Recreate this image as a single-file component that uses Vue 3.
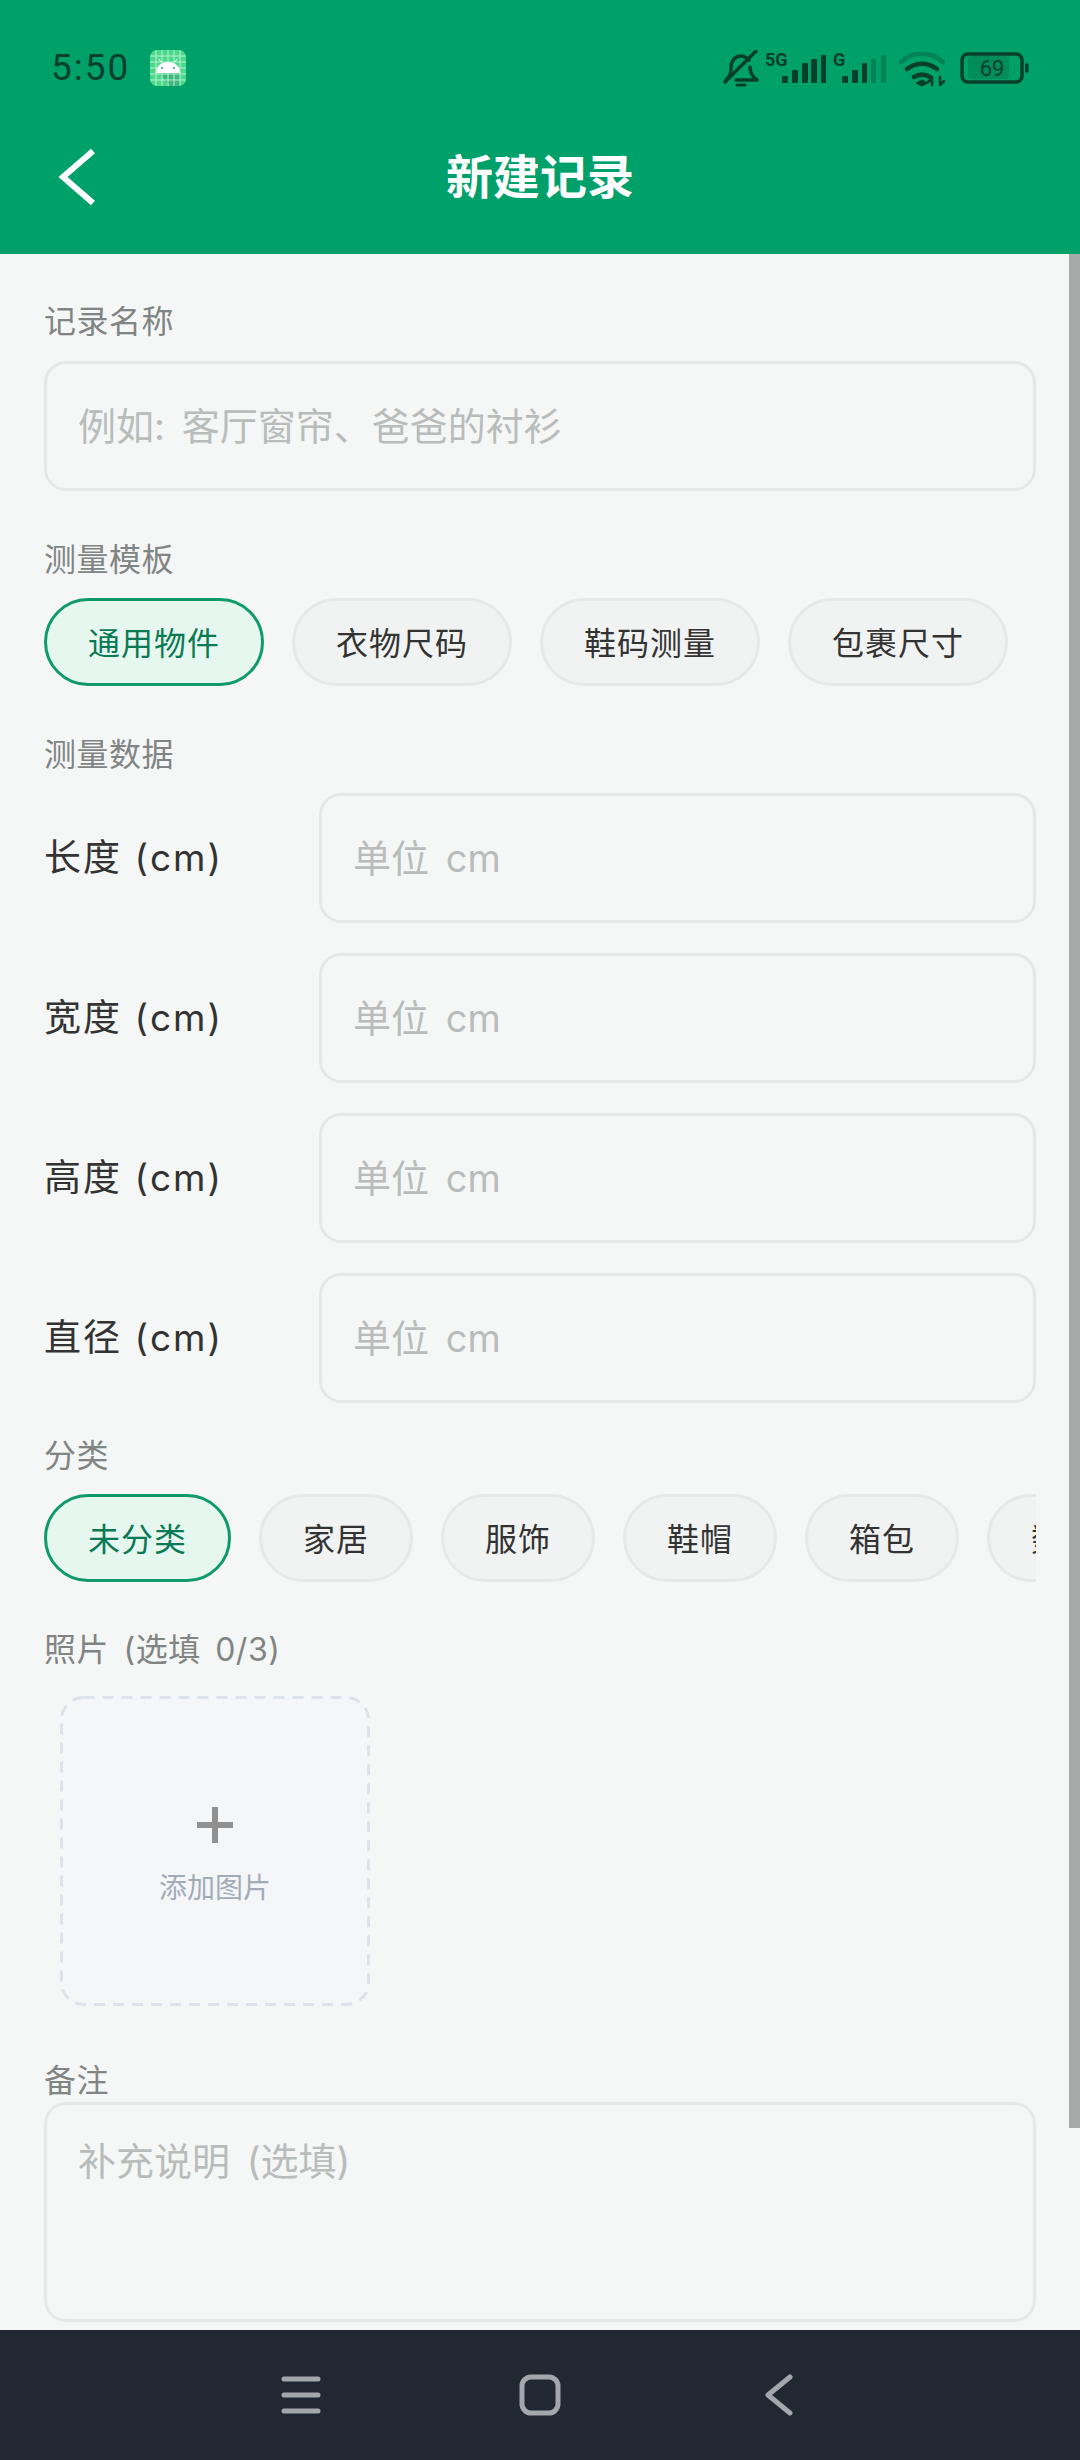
<template>
  <div class="screen">
    <header class="top">
      <div class="status">
        <span class="time">5:50</span>
        <svg class="app-icon" width="36" height="36" viewBox="0 0 36 36">
          <rect width="36" height="36" rx="7" fill="#4cd98c" />
          <path d="M6 19h24L30 36H20z" fill="#3aa878" opacity=".7" />
          <path d="M6 0v36M12 0v36M18 0v36M24 0v36M30 0v36M0 6h36M0 12h36M0 18h36M0 24h36M0 30h36" stroke="#b5f2d0" stroke-width="1" />
          <path d="M6 23c0-7 5-11 12-11s12 4 12 11z" fill="#fff" />
          <path d="M11 12l-2-3M25 12l2-3" stroke="#fff" stroke-width="1" />
          <circle cx="12" cy="18" r="1" fill="#2a9c68" />
          <circle cx="24" cy="18" r="1" fill="#2a9c68" />
        </svg>
        <div class="status-icons">
          <svg width="36" height="40" viewBox="0 0 36 40" fill="none" stroke="#063f2c" stroke-width="3.5" stroke-linecap="round" stroke-linejoin="round">
            <path d="M3 30c3-3 5-5 5-12 0-7 4-12 10-12 3 0 6 2 8 4" />
            <path d="M27 17c0 7 3 10 7 13H13" />
            <path d="M2 32L33 1" />
            <path d="M14 35h8" stroke-width="3" />
          </svg>
          <svg width="61" height="40" viewBox="0 0 61 40" fill="#063f2c">
            <text x="-1" y="16" class="net">5G</text>
            <rect x="16" y="26" width="6" height="7" rx="1" />
            <rect x="26" y="20" width="6" height="13" rx="1" />
            <rect x="36" y="13" width="6" height="20" rx="1" />
            <rect x="45" y="9" width="6" height="24" rx="1" />
            <rect x="55" y="5" width="5" height="28" rx="1" />
          </svg>
          <svg width="54" height="40" viewBox="0 0 54 40" fill="#063f2c">
            <text x="0" y="16" class="net">G</text>
            <rect x="9" y="26" width="6" height="7" rx="1" />
            <rect x="19" y="20" width="6" height="13" rx="1" />
            <rect x="29" y="13" width="5" height="20" rx="1" />
            <rect x="38" y="9" width="5" height="24" rx="1" opacity=".3" />
            <rect x="48" y="5" width="5" height="28" rx="1" opacity=".3" />
          </svg>
          <svg width="47" height="40" viewBox="0 0 47 40" fill="none" stroke="#063f2c" stroke-width="4.5" stroke-linecap="round">
            <path d="M2 12c12-11 30-11 42 0" opacity=".3" />
            <path d="M8 19c9-7 21-7 30 0" />
            <path d="M15 27c5-3 11-3 16 0" />
            <path d="M18 33l5-3 5 3-5 3z" fill="#063f2c" stroke-width="1.5" />
            <path d="M33 27v8M41 27v8M29 32l4-4M45 31l-4 4" stroke-width="2.5" />
          </svg>
          <svg width="70" height="40" viewBox="0 0 70 40">
            <rect x="8" y="6" width="41" height="23" rx="3" fill="#008c5d" />
            <rect x="2" y="4" width="60" height="28" rx="6" fill="none" stroke="#063f2c" stroke-width="3.5" />
            <rect x="65" y="13" width="3.5" height="10" rx="1.7" fill="#063f2c" />
            <text x="32" y="25.5" class="level">69</text>
          </svg>
        </div>
      </div>
      <div class="navbar">
        <svg class="back" width="38" height="60" viewBox="0 0 38 60" fill="none" stroke="#fff" stroke-width="6">
          <path d="M35 3L5 29l30 26" />
        </svg>
        <h1>新建记录</h1>
      </div>
    </header>

    <main class="content">
      <div class="thumb"></div>

      <section class="field name">
        <label>记录名称</label>
        <input class="box" placeholder="例如: 客厅窗帘、爸爸的衬衫" />
      </section>

      <section class="field">
        <label>测量模板</label>
        <div class="chips">
          <span v-for="(t, i) in templates" :key="t" class="chip" :class="{ on: i === 0 }">{{ t }}</span>
        </div>
      </section>

      <section class="field data">
        <label>测量数据</label>
        <div class="rows">
          <div v-for="d in dimensions" :key="d" class="row">
            <span class="row-name">{{ d }} (cm)</span>
            <input class="box" placeholder="单位 cm" />
          </div>
        </div>
      </section>

      <section class="field cats">
        <label>分类</label>
        <div class="chips clip">
          <span v-for="(c, i) in categories" :key="c" class="chip" :class="{ on: i === 0 }">{{ c }}</span>
        </div>
      </section>

      <section class="field photo">
        <label>照片 (选填 0/3)</label>
        <div class="upload">
          <svg class="dash" width="310" height="310" viewBox="0 0 310 310" fill="none" stroke="#dee2eb" stroke-width="3" stroke-dasharray="11 8">
            <rect x="1.5" y="1.5" width="307" height="307" rx="22" />
          </svg>
          <svg width="38" height="38" viewBox="0 0 38 38" stroke="#909090" stroke-width="6">
            <path d="M19 1v36M1 19h36" />
          </svg>
          <span>添加图片</span>
        </div>
      </section>

      <section class="note">
        <label>备注</label>
        <textarea class="box" placeholder="补充说明 (选填)"></textarea>
      </section>
    </main>

    <footer class="sysnav">
      <svg width="42" height="42" viewBox="0 0 42 42" stroke="#a3a6ab" stroke-width="5" stroke-linecap="round">
        <path d="M4 5h34M4 21h34M4 37h34" />
      </svg>
      <svg width="42" height="42" viewBox="0 0 42 42" fill="none" stroke="#a3a6ab" stroke-width="5">
        <rect x="3" y="3" width="36" height="36" rx="9" />
      </svg>
      <svg width="42" height="42" viewBox="0 0 42 42" fill="none" stroke="#a3a6ab" stroke-width="5" stroke-linecap="round" stroke-linejoin="round">
        <path d="M32 3L10 21l22 18" />
      </svg>
    </footer>
  </div>
</template>

<script setup>
const templates = ["通用物件", "衣物尺码", "鞋码测量", "包裹尺寸"];
const dimensions = ["长度", "宽度", "高度", "直径"];
const categories = ["未分类", "家居", "服饰", "鞋帽", "箱包", "数码"];
</script>

<style>
html,
body {
  margin: 0;
  padding: 0;
}
</style>

<style scoped>
.screen {
  width: 1080px;
  height: 2460px;
  display: flex;
  flex-direction: column;
  overflow: hidden;
  background: #f5f7f6;
  font-family: Inter, "Noto Sans CJK SC", sans-serif;
}

/* header */
.top {
  height: 254px;
  flex: none;
  background: #00a06b;
  box-sizing: border-box;
}
.status {
  height: 136px;
  box-sizing: border-box;
  padding: 48px 50px 0 51px;
  display: flex;
  align-items: flex-start;
}
.time {
  font-family: Roboto, sans-serif;
  font-size: 37px;
  line-height: 40px;
  letter-spacing: 2px;
  color: #063f2c;
}
.app-icon {
  margin: 2px 0 0 20px;
}
.status-icons {
  margin-left: auto;
  margin-top: 2px;
  display: flex;
  gap: 6px;
}
.status-icons svg:nth-child(2) {
  margin-left: 1px;
}
.status-icons svg:nth-child(4) {
  margin-left: 6px;
}
.status-icons svg:nth-child(5) {
  margin-left: 8px;
}
.net {
  font-family: Roboto, sans-serif;
  font-size: 18px;
  font-weight: 700;
}
.level {
  font-family: Roboto, sans-serif;
  font-size: 22px;
  text-anchor: middle;
  fill: #063f2c;
}
.navbar {
  height: 118px;
  position: relative;
  display: flex;
  align-items: center;
  justify-content: center;
}
.back {
  position: absolute;
  left: 58px;
  top: 12px;
}
h1 {
  margin: 0;
  font-size: 47px;
  font-weight: 700;
  color: #fff;
  line-height: 60px;
  position: relative;
  top: -18px;
}

/* form */
.content {
  flex: 1;
  min-height: 0;
  position: relative;
  box-sizing: border-box;
  padding: 46px 44px 0;
}
.thumb {
  position: absolute;
  top: 0;
  right: 0;
  width: 11px;
  height: 1874px;
  background: #a8aaa9;
}
.field {
  margin-bottom: 47px;
}
label {
  display: block;
  height: 44px;
  line-height: 44px;
  font-size: 32px;
  letter-spacing: 0.5px;
  word-spacing: 5px;
  color: #808584;
  margin-bottom: 16px;
}
.name label {
  margin-bottom: 17px;
}
.box {
  display: block;
  box-sizing: border-box;
  width: 100%;
  height: 130px;
  padding: 0 31px;
  border: 3px solid #e5e8e6;
  border-radius: 22px;
  background: transparent;
  font-family: inherit;
  font-size: 38px;
  word-spacing: 6px;
  color: #333;
  outline: none;
  resize: none;
}
.box::placeholder {
  color: #b8bdbb;
  opacity: 1;
}
.chips {
  display: flex;
  gap: 28px;
}
.clip {
  overflow: hidden;
}
.chip {
  flex: none;
  box-sizing: border-box;
  height: 88px;
  padding: 0 41px 2px;
  display: flex;
  align-items: center;
  border: 3px solid #e6e9e7;
  border-radius: 44px;
  background: #f1f3f2;
  font-size: 32px;
  letter-spacing: 1px;
  color: #333;
}
.chip.on {
  border-color: #109a6c;
  background: #e6f7ef;
  color: #0a7a54;
}
.rows {
  display: flex;
  flex-direction: column;
  gap: 30px;
}
.row {
  display: flex;
  align-items: center;
}
.row-name {
  width: 275px;
  flex: none;
  padding-bottom: 6px;
  font-size: 37px;
  letter-spacing: 2px;
  color: #333;
}
.data {
  margin-bottom: 31px;
}
.cats {
  margin-bottom: 46px;
}
.photo {
  margin-bottom: 53px;
}
.photo label {
  margin-bottom: 24px;
}
.upload {
  position: relative;
  margin-left: 16px;
  width: 310px;
  height: 310px;
  box-sizing: border-box;
  padding-top: 9px;
  border-radius: 22px;
  background: #f5f6f8;
  display: flex;
  flex-direction: column;
  align-items: center;
  justify-content: center;
  gap: 22px;
  font-size: 28px;
  color: #a3abb8;
}
.dash {
  position: absolute;
  top: 0;
  left: 0;
}
.note label {
  margin-bottom: -1px;
}
.note .box {
  height: 220px;
  padding: 26px 31px;
}

/* system navigation */
.sysnav {
  height: 130px;
  flex: none;
  background: #212832;
  display: flex;
  align-items: center;
  justify-content: center;
  gap: 197px;
}
</style>
